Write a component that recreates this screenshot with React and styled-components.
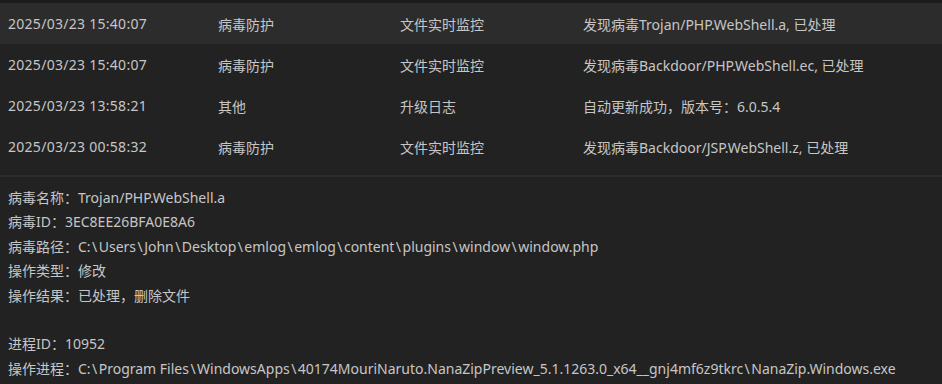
import React from "react";
import styled, { createGlobalStyle } from "styled-components";

const Global = createGlobalStyle`
  html, body { margin: 0; padding: 0; background: #222222; }
  body {
    font-family: "Noto Sans", "Noto Sans CJK SC", sans-serif;
    font-size: 14px;
    color: #c6c6c6;
  }
`;

const Page = styled.div`
  width: 942px;
  height: 384px;
  overflow: hidden;
  background: #1b1b1b;
  padding-top: 3px;
  box-sizing: border-box;
  display: flex;
  flex-direction: column;
`;

const List = styled.div`
  background: #222222;
  padding-bottom: 8px;
  border-bottom: 2px solid #2c2c2c;
`;

const Row = styled.div`
  display: grid;
  grid-template-columns: 210px 182px 183px 1fr;
  align-items: center;
  height: 41px;
  padding-left: 8px;
  background: ${(p) => (p.$selected ? "#2c2c2c" : "#222222")};
  white-space: nowrap;
`;

const Cell = styled.div`
  overflow: hidden;
  letter-spacing: ${(p) => (p.$time ? "0.28px" : "normal")};
`;

const Detail = styled.div`
  flex: 1;
  background: #222222;
  padding: 9px 8px 0;
`;

const Line = styled.div`
  line-height: 24.4px;
  height: 24.4px;
  white-space: nowrap;
`;

const Backslash = styled.span`
  margin: 0 1.45px;
`;

const withSlashes = (s) => {
  const parts = s.split("\\");
  const out = [];
  parts.forEach((p, i) => {
    if (i > 0) out.push(<Backslash key={"b" + i}>\</Backslash>);
    out.push(<React.Fragment key={"t" + i}>{p}</React.Fragment>);
  });
  return out;
};

const rows = [
  ["2025/03/23 15:40:07", "病毒防护", "文件实时监控", "发现病毒Trojan/PHP.WebShell.a, 已处理"],
  ["2025/03/23 15:40:07", "病毒防护", "文件实时监控", "发现病毒Backdoor/PHP.WebShell.ec, 已处理"],
  ["2025/03/23 13:58:21", "其他", "升级日志", "自动更新成功，版本号：6.0.5.4"],
  ["2025/03/23 00:58:32", "病毒防护", "文件实时监控", "发现病毒Backdoor/JSP.WebShell.z, 已处理"],
];

const details = [
  "病毒名称：Trojan/PHP.WebShell.a",
  "病毒ID：3EC8EE26BFA0E8A6",
  "病毒路径：C:\\Users\\John\\Desktop\\emlog\\emlog\\content\\plugins\\window\\window.php",
  "操作类型：修改",
  "操作结果：已处理，删除文件",
  "",
  "进程ID：10952",
  "操作进程：C:\\Program Files\\WindowsApps\\40174MouriNaruto.NanaZipPreview_5.1.1263.0_x64__gnj4mf6z9tkrc\\NanaZip.Windows.exe",
];

export default function App() {
  return (
    <>
      <Global />
      <Page>
        <List>
          {rows.map((r, i) => (
            <Row key={i} $selected={i === 0}>
              {r.map((c, j) => (
                <Cell key={j} $time={j === 0}>{c}</Cell>
              ))}
            </Row>
          ))}
        </List>
        <Detail>
          {details.map((d, i) => (
            <Line key={i}>{withSlashes(d)}</Line>
          ))}
        </Detail>
      </Page>
    </>
  );
}
